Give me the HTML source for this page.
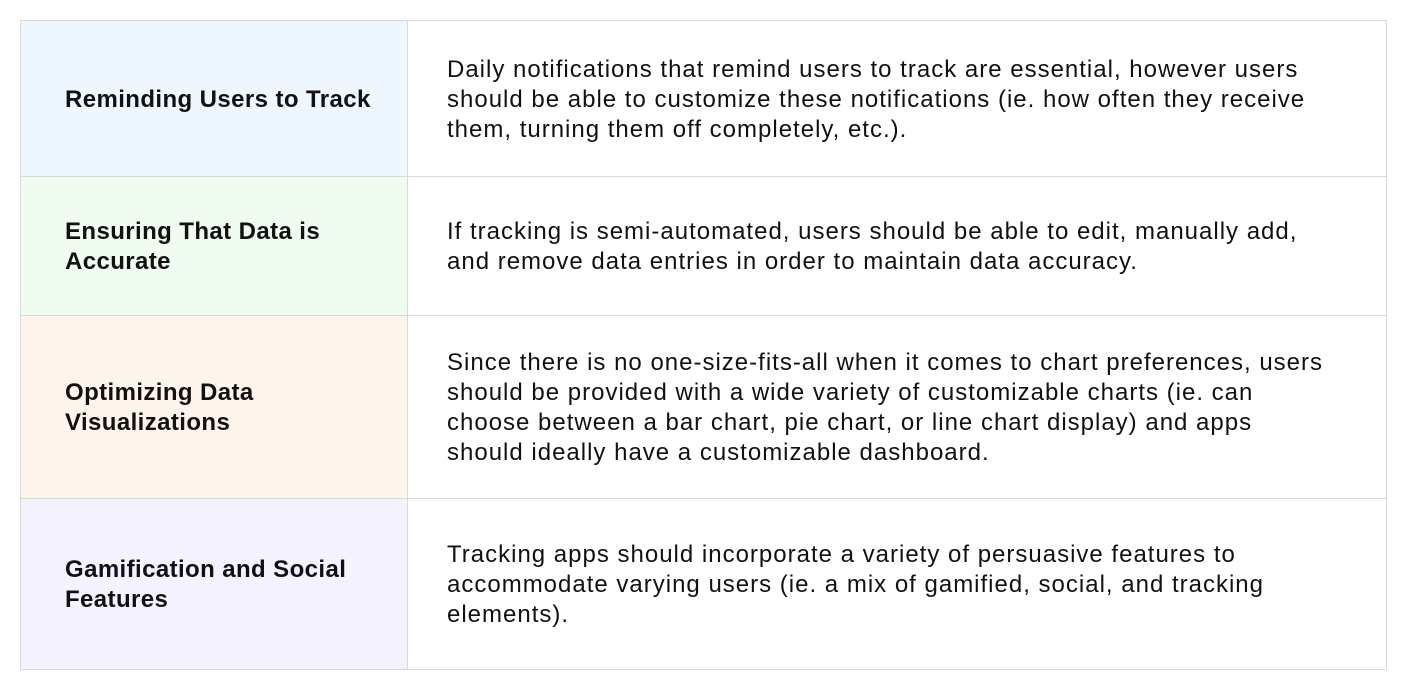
<!DOCTYPE html>
<html><head><style>
body{margin:0;background:#fff;width:1407px;height:690px;position:relative;font-family:"Liberation Sans",sans-serif;color:#111;}
.c{position:absolute;box-sizing:border-box;border:1px solid #d9d9d9;display:flex;align-items:center;white-space:nowrap;}
.l{left:20px;width:388px;padding-left:44px;font-weight:bold;font-size:24px;line-height:30px;letter-spacing:0.4px;padding-top:2px}
.r{left:407px;width:980px;padding-left:39px;font-size:24px;line-height:30px;letter-spacing:1.0px;padding-top:2px}
</style></head><body>
<div class="c l" style="top:20px;height:157px;background:#eff7fe">Reminding Users to Track</div>
<div class="c r" style="top:20px;height:157px">Daily notifications that remind users to track are essential, however users<br>should be able to customize these notifications (ie. how often they receive<br>them, turning them off completely, etc.).</div>
<div class="c l" style="top:176px;height:140px;background:#f0fcf0">Ensuring That Data is<br>Accurate</div>
<div class="c r" style="top:176px;height:140px">If tracking is semi-automated, users should be able to edit, manually add,<br>and remove data entries in order to maintain data accuracy.</div>
<div class="c l" style="top:315px;height:184px;background:#fdf4ec">Optimizing Data<br>Visualizations</div>
<div class="c r" style="top:315px;height:184px">Since there is no one-size-fits-all when it comes to chart preferences, users<br>should be provided with a wide variety of customizable charts (ie. can<br>choose between a bar chart, pie chart, or line chart display) and apps<br>should ideally have a customizable dashboard.</div>
<div class="c l" style="top:498px;height:172px;background:#f3f2fe">Gamification and Social<br>Features</div>
<div class="c r" style="top:498px;height:172px">Tracking apps should incorporate a variety of persuasive features to<br>accommodate varying users (ie. a mix of gamified, social, and tracking<br>elements).</div>
</body></html>
